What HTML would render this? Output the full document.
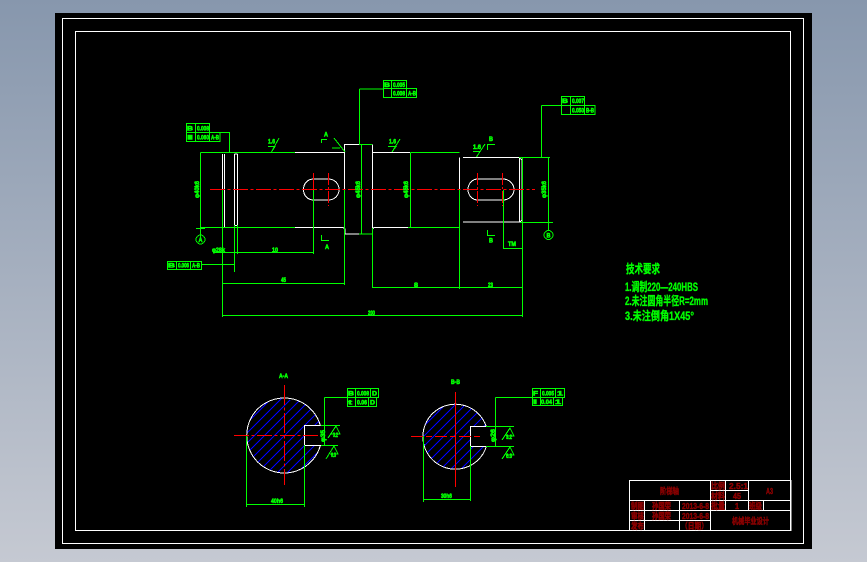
<!DOCTYPE html>
<html>
<head>
<meta charset="utf-8">
<style>
html,body{margin:0;padding:0;width:867px;height:562px;overflow:hidden;background:linear-gradient(180deg,#8797ad 0%,#c5c9d2 100%);}
svg{position:absolute;left:0;top:0;display:block;}
.g line,.g path,.g rect,.g circle,.g polyline{stroke:#00ff00;fill:none;stroke-width:1;}
.w path,.w line{stroke:#fff;fill:none;stroke-width:1;}
.r line{stroke:#ff0000;stroke-width:1;}
text{font-family:"Liberation Sans","Noto Sans CJK SC",sans-serif;}
.t text{fill:#00ff00;font-weight:bold;font-size:6.5px;stroke:#00ff00;stroke-width:.6;}
.n text{fill:#00ff00;font-weight:bold;font-size:12px;stroke:#00ff00;stroke-width:.35;}
.d text{fill:#8c0000;font-weight:bold;font-size:8.5px;stroke:#8c0000;stroke-width:.45;}
</style>
</head>
<body>
<svg width="867" height="562" viewBox="0 0 867 562" shape-rendering="crispEdges">
<defs>
<clipPath id="c1"><circle cx="284.3" cy="435.7" r="37.5"/></clipPath>
<clipPath id="c2"><circle cx="455.3" cy="436.8" r="32.5"/></clipPath>
</defs>
<rect x="55" y="13" width="757" height="536" fill="#000"/>
<rect x="62.5" y="18.5" width="741" height="525" fill="none" stroke="#fff"/>
<rect x="75.5" y="31.5" width="715" height="499" fill="none" stroke="#fff"/>

<!-- hatch -->
<g clip-path="url(#c1)" stroke="#0000ff" stroke-width="1">
<path d="M230 460L290 400M230 470L300 400M230 480L310 400M235 485L320 400M245 485L330 400M255 485L340 400M265 485L345 405M275 485L345 415M285 485L345 425M295 485L345 435M305 485L345 445M315 485L345 455M225 455L285 395M225 445L275 395M225 435L265 395" fill="none"/>
</g>
<rect x="304.5" y="426" width="20" height="19" fill="#000"/>
<g clip-path="url(#c2)" stroke="#0000ff" stroke-width="1">
<path d="M410 460L475 395M410 470L485 395M410 480L495 395M420 480L500 400M430 480L500 410M440 480L500 420M450 480L500 430M460 480L500 440M470 480L500 450M480 480L500 460M410 450L465 395M410 440L455 395M410 430L445 395" fill="none"/>
</g>
<rect x="471" y="427" width="20" height="19" fill="#000"/>

<!-- white outlines -->
<g class="w">
<path d="M295 152.5H344.5V144.5H359M372 152.5H410"/>
<path d="M372.5 144.5V234M344.5 144.5V189.5"/>
<path d="M295 227.5H343L345 229V234H359M372.500 229L374 227.5H408"/>
<path d="M222.5 154V189.500M224.5 154V227M234.5 154V225.5H237.5V154M234.5 154H237.5"/>
<path d="M459.5 157.5V189.500M463 157.500H519L522 160V220L520 222H463"/>
<path d="M519.5 158V222"/>
<path d="M314 179H328C335 179 339 184 339 189.500C339 195 335 200 328 200H314C307 200 303.500 195 303.500 189.500C303.500 184 307 179 314 179Z"/>
<path d="M478 179H503C509 179 514 184 514 189.500C514 195 509 200 503 200H478C472 200 468 195 468 189.500C468 184 472 179 478 179Z"/>
<path d="M320.400 425.700A37.500 37.500 0 1 0 320.400 445.300H304.500V425.700H320.400"/>
<path d="M486.300 426.700A32.500 32.500 0 1 0 486.300 446.700H470.700V426.700H486.300"/>
</g>

<!-- green geometry -->
<g class="g">
<path d="M200.500 152.500H295M200.500 152.500V239"/>
<path d="M200.500 227.500H295"/>
<path d="M196 228.500H205"/>
<circle cx="200.500" cy="239.500" r="4.500"/>
<path d="M344.500 189.500V285M359 234H372.500M359 144.500H372M361.500 144.500V234M372.500 228V288"/>
<path d="M359.500 89V144.500M359.500 89H383"/>
<path d="M410.500 152.500H459.500M410.500 152.500V227.500M408 227.500H459.500"/>
<path d="M459.500 189.500V289"/>
<path d="M519 157.500H550M520 222.500H549M548.500 157.500V230"/>
<path d="M544 222.500H553"/>
<circle cx="548.500" cy="235" r="4.500"/>
<path d="M503.500 190V249M503.500 248.500H522"/>
<path d="M522.500 158V317"/>
<path d="M222.500 189.500V317M222.500 283.500H345M222.500 315.500H522.500"/>
<path d="M372.500 287.500H522.500"/>
<path d="M234.500 225V272M237.500 225V254M213 252.500H313.500M313.500 190V254"/>
<path d="M202 264.500H234.500"/>
<path d="M220 132.500H229.500V152.500"/>
<path d="M541.500 105.500H561M541.500 105.500V157.500"/>
<!-- top left box -->
<path d="M186.500 123.500H209.500V132.500H186.500ZM186.500 132.500H220V141.500H186.500ZM195.500 123.500V141.500M209.500 123.500V141.500"/>
<!-- top mid box -->
<path d="M383.500 80.500H406.500V88.500H383.500ZM383.500 88.500H416.500V97.500H383.500ZM391.500 80.500V97.500M406.500 80.500V97.500"/>
<!-- top right box -->
<path d="M561.500 96.500H584.500V105.500H561.500ZM561.500 105.500H595V114.500H561.500ZM570.500 96.500V114.500M584.500 96.500V114.500"/>
<!-- lower left box -->
<path d="M167.500 261.500H201.500V269.500H167.500ZM176.500 261.500V269.500M190.500 261.500V269.500"/>
<!-- roughness -->
<path d="M268 146.500H275L271.500 152L279 138"/>
<path d="M388 146.500H396L392 152L400 139"/>
<path d="M473 151.500H480L476.500 157L485 144"/>
<path d="M334 138L345 152M332 148H340"/>
<!-- section markers -->
<path d="M321.500 143V139.500H327M487.500 150V144.500H495M321.500 235V240.500H329M487.500 230V235.500H495"/>
<!-- section 1 -->
<path d="M246.500 436V507M304.500 445V507M246.500 504.500H304.500"/>
<path d="M324.500 397.500V445M324.500 397.500H347M321 425.500H340M321 445.500H338"/>
<path d="M347.500 388.500H378.500V397.500H347.500ZM347.500 397.500H376.500V406.500H347.500ZM355.500 388.500V406.500M370.500 388.500V397.500M368.500 397.500V406.500"/>
<path d="M328 438L336 426L340 434H331M326 459L334 446L338 454H330"/>
<!-- section 2 -->
<path d="M423.500 436V502M470.500 446V501M423.500 499.500H470.500"/>
<path d="M495.500 397.500V446.500M495.500 397.500H532M486 426.500H514M486 446.500H514"/>
<path d="M532.500 388.500H564.500V397.500H532.500ZM532.500 397.500H562.500V405.500H532.500ZM540.500 388.500V405.500M555.500 388.500V397.500M553.500 397.500V405.500"/>
<path d="M502 440L510 428L514 436H506M502 459L510 447L514 455H506"/>
</g>

<!-- red centre lines -->
<g class="r">
<line x1="210" y1="189.500" x2="535" y2="189.500" stroke-dasharray="15 2.500 3 2.500"/>
<line x1="313.500" y1="173" x2="313.500" y2="190"/>
<line x1="328.500" y1="173" x2="328.500" y2="206" stroke-dasharray="12 2 2 2"/>
<line x1="477.500" y1="173" x2="477.500" y2="206" stroke-dasharray="12 2 2 2"/>
<line x1="502.500" y1="173" x2="502.500" y2="206" stroke-dasharray="12 2 2 2"/>
<line x1="234" y1="435.500" x2="320" y2="435.500" stroke-dasharray="15 2.500 3 2.500"/>
<line x1="284.500" y1="385" x2="284.500" y2="485" stroke-dasharray="20 2.500 3 2.500"/>
<line x1="411" y1="436.500" x2="483" y2="436.500" stroke-dasharray="12 3 6 3"/>
<line x1="455.500" y1="392" x2="455.500" y2="487"/>
</g>

<!-- green small labels -->
<g class="t">
<text x="187" y="130.500" textLength="6" lengthAdjust="spacingAndGlyphs">B</text>
<text x="197" y="130.500" textLength="12" lengthAdjust="spacingAndGlyphs">0.008</text>
<text x="187" y="139.500" textLength="6" lengthAdjust="spacingAndGlyphs">I</text>
<text x="197" y="139.500" textLength="12" lengthAdjust="spacingAndGlyphs">0.060</text>
<text x="211" y="139.500" textLength="8" lengthAdjust="spacingAndGlyphs">A-B</text>
<text x="384" y="87" textLength="6" lengthAdjust="spacingAndGlyphs">B</text>
<text x="393" y="87" textLength="12" lengthAdjust="spacingAndGlyphs">0.005</text>
<text x="393" y="95.500" textLength="12" lengthAdjust="spacingAndGlyphs">0.008</text>
<text x="408" y="95.500" textLength="8" lengthAdjust="spacingAndGlyphs">A-B</text>
<text x="562" y="103" textLength="6" lengthAdjust="spacingAndGlyphs">B</text>
<text x="572" y="103" textLength="12" lengthAdjust="spacingAndGlyphs">0.007</text>
<text x="572" y="112.500" textLength="12" lengthAdjust="spacingAndGlyphs">0.050</text>
<text x="586" y="112.500" textLength="8" lengthAdjust="spacingAndGlyphs">B-B</text>
<text x="168" y="267.500" textLength="7" lengthAdjust="spacingAndGlyphs">B</text>
<text x="178" y="267.500" textLength="11" lengthAdjust="spacingAndGlyphs">0.006</text>
<text x="192" y="267.500" textLength="8" lengthAdjust="spacingAndGlyphs">A-B</text>
<text x="348" y="395.500" textLength="6" lengthAdjust="spacingAndGlyphs">B</text>
<text x="357" y="395.500" textLength="12" lengthAdjust="spacingAndGlyphs">0.008</text>
<text x="372" y="395.500" textLength="5" lengthAdjust="spacingAndGlyphs">D</text>
<text x="348" y="404.500" textLength="4" lengthAdjust="spacingAndGlyphs">t</text>
<text x="357" y="404.500" textLength="10" lengthAdjust="spacingAndGlyphs">0.06</text>
<text x="370" y="404.500" textLength="5" lengthAdjust="spacingAndGlyphs">D</text>
<text x="533" y="395.500" textLength="5" lengthAdjust="spacingAndGlyphs">F</text>
<text x="542" y="395.500" textLength="12" lengthAdjust="spacingAndGlyphs">0.005</text>
<text x="557" y="395.500" textLength="6" lengthAdjust="spacingAndGlyphs">1</text>
<text x="533" y="404" textLength="4" lengthAdjust="spacingAndGlyphs">I</text>
<text x="541" y="404" textLength="11" lengthAdjust="spacingAndGlyphs">0.04</text>
<text x="555" y="404" textLength="6" lengthAdjust="spacingAndGlyphs">1</text>
<text x="268" y="143.500" textLength="7" lengthAdjust="spacingAndGlyphs">1.6</text>
<text x="389" y="143.500" textLength="7" lengthAdjust="spacingAndGlyphs">1.6</text>
<text x="473" y="149" textLength="8" lengthAdjust="spacingAndGlyphs">1.6</text>
<text x="324" y="136.500" textLength="4" lengthAdjust="spacingAndGlyphs">A</text>
<text x="489" y="141" textLength="4" lengthAdjust="spacingAndGlyphs">B</text>
<text x="325" y="249" textLength="4" lengthAdjust="spacingAndGlyphs">A</text>
<text x="489" y="242.500" textLength="4" lengthAdjust="spacingAndGlyphs">B</text>
<text x="508" y="246" textLength="8" lengthAdjust="spacingAndGlyphs">TM</text>
<text x="212" y="252" textLength="13" lengthAdjust="spacingAndGlyphs">φ28k</text>
<text x="272" y="252" textLength="6" lengthAdjust="spacingAndGlyphs">10</text>
<text x="281" y="282" textLength="5" lengthAdjust="spacingAndGlyphs">45</text>
<text x="414" y="287" textLength="4" lengthAdjust="spacingAndGlyphs">8</text>
<text x="488" y="287" textLength="5" lengthAdjust="spacingAndGlyphs">23</text>
<text x="368" y="315" textLength="7" lengthAdjust="spacingAndGlyphs">200</text>
<text x="279" y="378" textLength="9" lengthAdjust="spacingAndGlyphs">A-A</text>
<text x="451" y="384" textLength="9" lengthAdjust="spacingAndGlyphs">B-B</text>
<text x="271" y="503" textLength="12" lengthAdjust="spacingAndGlyphs">40h6</text>
<text x="441" y="498" textLength="11" lengthAdjust="spacingAndGlyphs">30h6</text>
<text transform="translate(199,198) rotate(-90)" textLength="17" lengthAdjust="spacingAndGlyphs">φ40k6</text>
<text transform="translate(360,198) rotate(-90)" textLength="17" lengthAdjust="spacingAndGlyphs">φ45k6</text>
<text transform="translate(408,198) rotate(-90)" textLength="17" lengthAdjust="spacingAndGlyphs">φ45k6</text>
<text transform="translate(546,198) rotate(-90)" textLength="17" lengthAdjust="spacingAndGlyphs">φ35k6</text>
<text transform="translate(325,442) rotate(-90)" textLength="12" lengthAdjust="spacingAndGlyphs">φ35</text>
<text transform="translate(495,442) rotate(-90)" textLength="13" lengthAdjust="spacingAndGlyphs">φ26</text>
<text x="198.500" y="242" font-size="5" textLength="4" lengthAdjust="spacingAndGlyphs">A</text>
<text x="546.500" y="237.500" font-size="5" textLength="4" lengthAdjust="spacingAndGlyphs">B</text>
<text x="333" y="437" textLength="5" lengthAdjust="spacingAndGlyphs">3.2</text>
<text x="331" y="457" textLength="5" lengthAdjust="spacingAndGlyphs">6.3</text>
<text x="506" y="439" textLength="6" lengthAdjust="spacingAndGlyphs">3.2</text>
<text x="506" y="458" textLength="6" lengthAdjust="spacingAndGlyphs">6.3</text>
</g>

<!-- technical notes -->
<g class="n">
<text x="626" y="273" textLength="34" lengthAdjust="spacingAndGlyphs">技术要求</text>
<text x="625" y="291" textLength="73" lengthAdjust="spacingAndGlyphs">1.调制220—240HBS</text>
<text x="625" y="305" textLength="83" lengthAdjust="spacingAndGlyphs">2.未注圆角半径R=2mm</text>
<text x="625" y="320" textLength="69" lengthAdjust="spacingAndGlyphs">3.未注倒角1X45°</text>
</g>

<!-- title block -->
<path d="M629.500 480.500H791V530.500H629.500ZM629.500 500.500H791M629.500 510.500H791M629.500 520.500H710.500M710.500 490.500H748.500M710.500 480.500V530.500M725.500 480.500V510.500M748.500 480.500V510.500M763.500 500.500V510.500M644.500 500.500V530.500M679.500 500.500V530.500" fill="none" stroke="#fff"/>
<g class="d">
<text x="660" y="494" textLength="19" lengthAdjust="spacingAndGlyphs">阶梯轴</text>
<text x="711" y="489" textLength="14" lengthAdjust="spacingAndGlyphs">比例</text>
<text x="729" y="489" textLength="19" lengthAdjust="spacingAndGlyphs">2.5:1</text>
<text x="711" y="499" textLength="14" lengthAdjust="spacingAndGlyphs">材料</text>
<text x="733" y="499" textLength="8" lengthAdjust="spacingAndGlyphs">45</text>
<text x="766" y="494" textLength="7" lengthAdjust="spacingAndGlyphs">A3</text>
<text x="631" y="509" textLength="13" lengthAdjust="spacingAndGlyphs">制图</text>
<text x="652" y="509" textLength="19" lengthAdjust="spacingAndGlyphs">孙国荣</text>
<text x="682" y="509" textLength="27" lengthAdjust="spacingAndGlyphs">2013-6-8</text>
<text x="711" y="509" textLength="14" lengthAdjust="spacingAndGlyphs">批量</text>
<text x="735" y="509" textLength="4" lengthAdjust="spacingAndGlyphs">1</text>
<text x="749" y="509" textLength="13" lengthAdjust="spacingAndGlyphs">班级</text>
<text x="631" y="519" textLength="13" lengthAdjust="spacingAndGlyphs">审核</text>
<text x="652" y="519" textLength="19" lengthAdjust="spacingAndGlyphs">孙国荣</text>
<text x="682" y="519" textLength="27" lengthAdjust="spacingAndGlyphs">2013-6-8</text>
<text x="631" y="529" textLength="13" lengthAdjust="spacingAndGlyphs">发布</text>
<text x="681" y="529" textLength="27" lengthAdjust="spacingAndGlyphs">（日期）</text>
<text x="732" y="524" textLength="37" lengthAdjust="spacingAndGlyphs">机械毕业设计</text>
</g>
</svg>
</body>
</html>
